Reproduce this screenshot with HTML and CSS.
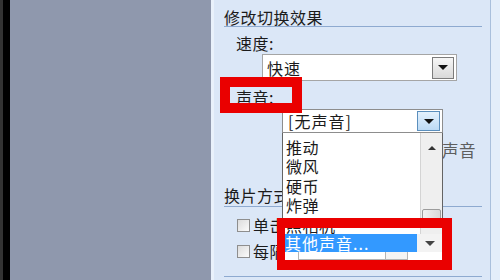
FILE: index.html
```html
<!DOCTYPE html>
<html lang="zh-CN">
<head>
  <meta charset="UTF-8" />
  <title>幻灯片切换</title>
  <link rel="stylesheet" href="styles.css">
</head>
<body>
  <div class="screen">
    <div class="edge"></div>
    <div class="slides"></div>
    <div class="pane-border"></div>

    <aside class="pane">
      <h3 class="group-title">修改切换效果</h3>
      <div class="field-label">速度:</div>
      <div class="combo combo-speed">
        <span class="combo-text">快速</span>
        <span class="combo-btn"><i class="arrow"></i></span>
      </div>

      <div class="field-label">声音:</div>
      <div class="sound-field">
        <div class="combo combo-sound">
          <span class="combo-text">[无声音]</span>
          <span class="combo-btn hot"><i class="arrow"></i></span>
        </div>
        <div class="dropdown">
          <ul class="options">
            <li>推动</li>
            <li>微风</li>
            <li>硬币</li>
            <li>炸弹</li>
            <li>照相机</li>
          </ul>
          <div class="scrollbar">
            <span class="scroll-up"><i class="arrow-up"></i></span>
            <span class="scroll-thumb"></span>
          </div>
        </div>
      </div>
      <div class="loop-row">循环播放，到下一声音</div>

      <h3 class="group-title title-advance">换片方式</h3>
      <label class="check-row"><span class="box"></span>单击鼠标时</label>
      <label class="check-row"><span class="box"></span>每隔</label>
      <div class="rule"></div>
    </aside>

    <div class="pane-edge"></div>

    <!-- red callouts drawn over the pane -->
    <div class="mark mark-label"></div>
    <div class="mark mark-other">
      <div class="peek"></div>
      <div class="picked">
        <span class="picked-text">其他声音...</span>
        <span class="picked-btn"><i class="arrow grey"></i></span>
      </div>
      <div class="under">
        <span class="under-box"><span class="under-btn"></span></span>
      </div>
    </div>
  </div>
</body>
</html>
```

FILE: styles.css
```css
* {
  margin: 0;
  padding: 0;
  box-sizing: border-box;
}

body {
  width: 500px;
  height: 280px;
  overflow: hidden;
  font-family: "Noto Sans CJK SC", "Noto Sans", sans-serif;
  font-size: 16px;
  color: #1b1b1b;
}

.screen {
  position: relative;
  display: flex;
  width: 500px;
  height: 280px;
  background: #e3eefa;
}

.edge {
  width: 10px;
  background: #000;
  border-left: 3px solid #333;
}

.slides {
  width: 201px;
  background: #8f98ad;
}

.pane-border {
  width: 3px;
  background: #e9f1fb;
}

.pane {
  width: 276px;
  padding: 0 8px 0 10px;
  background: #dbe7f7;
  letter-spacing: 0.5px;
  line-height: 18px;
}

.pane-edge {
  width: 1px;
  background: #a9c0dc;
}

.group-title {
  font-size: 16px;
  font-weight: normal;
  margin-top: 8px;
  border-bottom: 1px solid #8eaad0;
}

.title-advance {
  margin-top: 27px;
  padding-bottom: 2px;
}

.field-label {
  padding-left: 12px;
  margin-top: 7px;
}

.field-label + .combo-speed {
  margin-top: 2px;
}

.combo {
  display: flex;
  align-items: center;
  background: #fff;
  border: 1px solid #a5a5a5;
}

.combo-speed {
  margin-left: 38px;
  width: 195px;
  height: 27px;
  margin-bottom: 4px;
}

.combo-text {
  flex: 1;
  padding-left: 4px;
  letter-spacing: 1px;
}

.combo-btn {
  display: flex;
  align-items: center;
  justify-content: center;
  width: 22px;
  height: 22px;
  margin-right: 2px;
  border: 1px solid #7c7c7c;
  background: linear-gradient(#f6f6f6, #d9d9d9);
}

.combo-btn.hot {
  width: 23px;
  height: 20px;
  border-color: #5b8fbd;
  background: linear-gradient(#e3f1fd, #bcdaf5);
}

.arrow {
  width: 0;
  height: 0;
  border-left: 5px solid transparent;
  border-right: 5px solid transparent;
  border-top: 5px solid #111;
}

.arrow.grey {
  border-top-color: #444;
}

.sound-field {
  position: relative;
  margin: 3px 0 0 58px;
  width: 161px;
}

.combo-sound {
  height: 24px;
  border-color: #8d8d8d;
}

.combo-sound .combo-text {
  padding-left: 5px;
}

.dropdown {
  position: absolute;
  top: 24px;
  left: 0;
  z-index: 2;
  display: flex;
  width: 161px;
  height: 104px;
  background: #fff;
  border: 1px solid #646464;
  border-top: none;
}

.options {
  flex: 1;
  list-style: none;
  padding: 4.5px 0 0 3px;
  line-height: 19.6px;
  overflow: hidden;
}

.scrollbar {
  display: flex;
  flex-direction: column;
  width: 22px;
  background: #efefef;
  border-left: 1px solid #d4d4d4;
}

.scroll-up {
  display: flex;
  justify-content: center;
  padding-top: 13px;
  height: 22px;
}

.arrow-up {
  width: 0;
  height: 0;
  border-left: 4px solid transparent;
  border-right: 4px solid transparent;
  border-bottom: 4px solid #333;
}

.scroll-thumb {
  margin: 54px 1px 0;
  height: 16px;
  border: 1px solid #9c9c9c;
  border-radius: 2px;
  background: linear-gradient(90deg, #f2f2f2, #dadada);
}

.loop-row {
  margin: 8px 0 0 82px;
  color: #5e5e5e;
  font-size: 16.5px;
}

.check-row {
  display: flex;
  align-items: center;
  margin: 9px 0 0 13px;
}

.check-row + .check-row {
  margin-top: 8px;
}

.box {
  width: 13px;
  height: 13px;
  margin-right: 3px;
  border: 1px solid #8e8e8e;
  background: linear-gradient(135deg, #dcdcdc, #fbfbfb);
}

.rule {
  margin-top: 16px;
  border-top: 1px solid #8eaad0;
}

.mark {
  position: absolute;
  z-index: 5;
  border: 10px solid #ea0000;
}

.mark-label {
  left: 220px;
  top: 77px;
  width: 82px;
  height: 36px;
}

.mark-other {
  left: 277px;
  top: 218px;
  width: 175px;
  height: 52px;
  border-left-width: 8px;
  display: flex;
  flex-direction: column;
  letter-spacing: 0.5px;
}

.peek {
  height: 6px;
}

.picked {
  display: flex;
  height: 18px;
}

.picked-text {
  width: 132px;
  background: #3399ff;
  color: #fff;
  line-height: 18px;
  letter-spacing: 1px;
}

.picked-btn {
  flex: 1;
  display: flex;
  align-items: center;
  justify-content: center;
  background: #f3f3f3;
}

.under {
  flex: 1;
  display: flex;
  padding-left: 13px;
  background: #fff;
}

.under-box {
  display: flex;
  justify-content: flex-end;
  width: 110px;
  border: 1px solid #b4b4b4;
  border-top: none;
}

.under-btn {
  width: 22px;
  border-left: 1px solid #b4b4b4;
  background: #f4f4f4;
}
```
